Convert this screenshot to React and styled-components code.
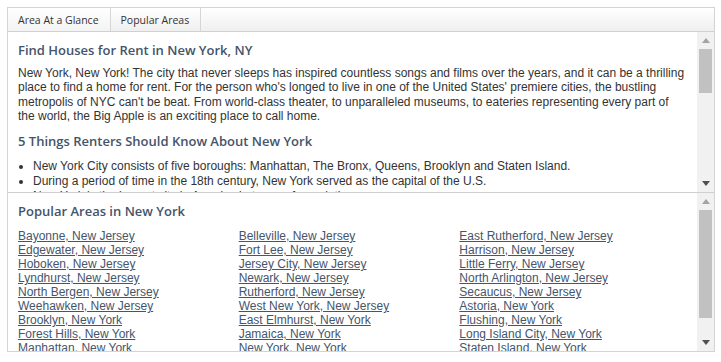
import React from "react";
import styled, { createGlobalStyle } from "styled-components";

const GlobalStyle = createGlobalStyle`
  html, body { margin: 0; padding: 0; background: #ffffff; }
  body { font-family: "Liberation Sans", Arial, sans-serif; }
  * { box-sizing: border-box; }
`;

const Page = styled.div`
  padding: 7px;
`;

const Frame = styled.div`
  width: 708px;
  border: 1px solid #d4d4d4;
  display: flex;
  flex-direction: column;
  background: #ffffff;
`;

const TabBar = styled.div`
  display: flex;
  height: 24px;
  border-bottom: 1px solid #d0d0d0;
  background: linear-gradient(#ffffff, #efefef);
`;

const Tab = styled.div`
  display: flex;
  align-items: center;
  padding: 0 11px 0 10px;
  border-right: 1px solid #d6d6d6;
  font-family: "Open Sans", "Noto Sans", sans-serif;
  font-size: 10.5px;
  color: #333333;
  background: ${(p) => (p.$active ? "linear-gradient(#ffffff, #f3f3f3)" : "transparent")};
`;

const Panel = styled.div`
  display: flex;
  height: ${(p) => p.$height}px;
  border-top: ${(p) => (p.$divided ? "1px solid #cfcfcf" : "none")};
`;

const PanelBody = styled.div`
  flex: 1;
  overflow: hidden;
  padding: 9px 10px 0 10px;
`;

const Heading = styled.h2`
  margin: 0;
  font-family: "Open Sans", "Noto Sans", sans-serif;
  font-weight: 600;
  font-size: 13px;
  line-height: 18px;
  color: #44546a;
`;

const Paragraph = styled.p`
  margin: 7px 0 8px;
  font-size: 12px;
  line-height: 1.2;
  color: #333333;
`;

const List = styled.ul`
  margin: 9px 0 0;
  padding-left: 15px;
  font-size: 12px;
  line-height: 15px;
  color: #333333;
`;

const LinkGrid = styled.div`
  margin-top: 9px;
  padding-right: 7px;
  display: grid;
  grid-template-columns: repeat(3, 1fr);
  font-size: 12px;
  line-height: 14px;
`;

const AreaLink = styled.a`
  color: #45556b;
  text-decoration: underline;
  white-space: nowrap;
`;

const Scrollbar = styled.div`
  width: 17px;
  flex: none;
  background: #f1f1f1;
  display: flex;
  flex-direction: column;
`;

const ArrowButton = styled.div`
  height: 17px;
  flex: none;
  display: flex;
  align-items: center;
  justify-content: center;
`;

const Track = styled.div`
  flex: 1;
  display: flex;
  flex-direction: column;
  align-items: center;
`;

const Thumb = styled.div`
  width: 13px;
  flex: none;
  margin-top: ${(p) => p.$offset}px;
  height: ${(p) => p.$size}px;
  background: #c1c1c1;
`;

function Arrow({ up, disabled }) {
  const color = disabled ? "#a3a3a3" : "#505050";
  return (
    <ArrowButton>
      <svg width="8" height="5" viewBox="0 0 8 5">
        {up ? (
          <polygon points="0,5 8,5 4,0" fill={color} />
        ) : (
          <polygon points="0,0 8,0 4,5" fill={color} />
        )}
      </svg>
    </ArrowButton>
  );
}

function FakeScrollbar({ offset, size }) {
  return (
    <Scrollbar>
      <Arrow up disabled />
      <Track>
        <Thumb $offset={offset} $size={size} />
      </Track>
      <Arrow />
    </Scrollbar>
  );
}

const areas = [
  "Bayonne, New Jersey",
  "Belleville, New Jersey",
  "East Rutherford, New Jersey",
  "Edgewater, New Jersey",
  "Fort Lee, New Jersey",
  "Harrison, New Jersey",
  "Hoboken, New Jersey",
  "Jersey City, New Jersey",
  "Little Ferry, New Jersey",
  "Lyndhurst, New Jersey",
  "Newark, New Jersey",
  "North Arlington, New Jersey",
  "North Bergen, New Jersey",
  "Rutherford, New Jersey",
  "Secaucus, New Jersey",
  "Weehawken, New Jersey",
  "West New York, New Jersey",
  "Astoria, New York",
  "Brooklyn, New York",
  "East Elmhurst, New York",
  "Flushing, New York",
  "Forest Hills, New York",
  "Jamaica, New York",
  "Long Island City, New York",
  "Manhattan, New York",
  "New York, New York",
  "Staten Island, New York",
  "Sunnyside, New York",
  "Woodside, New York",
];

export default function App() {
  return (
    <>
      <GlobalStyle />
      <Page>
        <Frame>
          <TabBar>
            <Tab $active>Area At a Glance</Tab>
            <Tab>Popular Areas</Tab>
          </TabBar>
          <Panel $height={160}>
            <PanelBody>
              <Heading>Find Houses for Rent in New York, NY</Heading>
              <Paragraph>
                New York, New York! The city that never sleeps has inspired countless songs and films over
                the years, and it can be a thrilling place to find a home for rent. For the person who's
                longed to live in one of the United States' premiere cities, the bustling metropolis of NYC
                can't be beat. From world-class theater, to unparalleled museums, to eateries representing
                every part of the world, the Big Apple is an exciting place to call home.
              </Paragraph>
              <Heading>5 Things Renters Should Know About New York</Heading>
              <List>
                <li>New York City consists of five boroughs: Manhattan, The Bronx, Queens, Brooklyn and Staten Island.</li>
                <li>During a period of time in the 18th century, New York served as the capital of the U.S.</li>
                <li>New York is the largest city in America in terms of population.</li>
                <li>The New York City Subway is one of the oldest and largest public transit systems in the world.</li>
                <li>Central Park covers more than 840 acres in the heart of Manhattan.</li>
              </List>
            </PanelBody>
            <FakeScrollbar offset={0} size={44} />
          </Panel>
          <Panel $height={159} $divided>
            <PanelBody>
              <Heading>Popular Areas in New York</Heading>
              <LinkGrid>
                {areas.map((a) => (
                  <div key={a}>
                    <AreaLink href="#">{a}</AreaLink>
                  </div>
                ))}
              </LinkGrid>
            </PanelBody>
            <FakeScrollbar offset={0} size={108} />
          </Panel>
        </Frame>
      </Page>
    </>
  );
}
